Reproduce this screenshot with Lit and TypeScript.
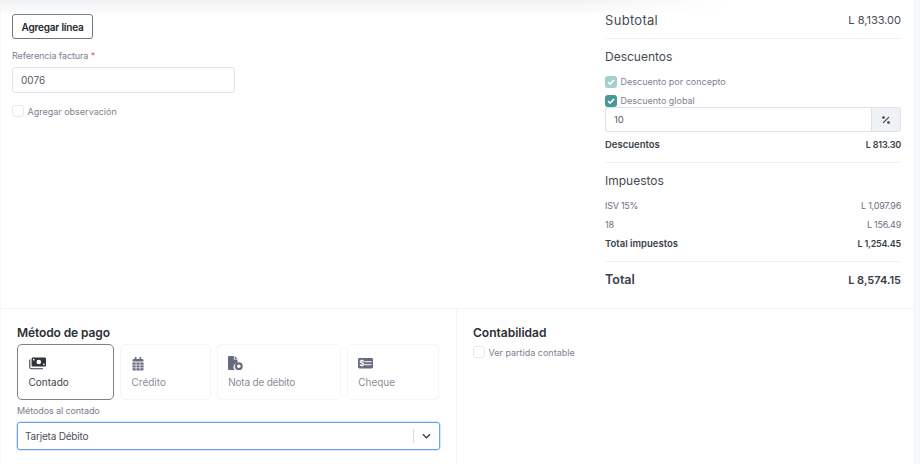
import { LitElement, html, css, svg } from "lit";
import { customElement } from "lit/decorators.js";

const check = svg`<svg viewBox="0 0 12 12" width="10" height="10"><path d="M2.5 6.2 5 8.6 9.6 3.6" fill="none" stroke="#fff" stroke-width="2"/></svg>`;

@customElement("app-root")
export class AppRoot extends LitElement {
  static styles = css`
    :host { display: block; width: 920px; height: 464px; overflow: hidden; position: relative; background: #f7f8fa; font-family: "Inter", "Open Sans", sans-serif; color: #3a3f4b; }
    .sheet { width: 912px; height: 464px; margin-left: 1px; background: #fff; display: flex; flex-direction: column; }
    .shade { position: absolute; left: 0; top: 0; width: 730px; height: 16px; background: linear-gradient(#f0f1f3, #ffffff00); -webkit-mask-image: linear-gradient(90deg, #000 78%, transparent); mask-image: linear-gradient(90deg, #000 78%, transparent); }
    .top { height: 308px; flex: none; display: flex; justify-content: space-between; border-bottom: 1px solid #f1f2f4; }
    .left { padding: 14px 0 0 11px; width: 223px; display: flex; flex-direction: column; align-items: flex-start; }
    .btn { box-sizing: border-box; height: 25px; width: 81px; border: 1px solid #6f7580; border-radius: 3px; font-size: 10px; letter-spacing: -.2px; font-weight: 600; color: #23262e; display: flex; align-items: center; justify-content: center; }
    .lab { font-size: 9px; color: #7a7e8c; line-height: 14px; margin-top: 10px; letter-spacing: -.1px; }
    .req { color: #e0566b; }
    .input { box-sizing: border-box; height: 26px; width: 223px; margin-top: 4px; border: 1px solid #e0e2e7; border-radius: 3px; padding-left: 8px; font-size: 10px; color: #555a66; display: flex; align-items: center; }
    .cb { display: flex; align-items: center; gap: 3.5px; font-size: 9px; color: #7d8190; }
    .box { box-sizing: border-box; width: 12px; height: 12px; border: 1px solid #e7e8ec; border-radius: 3px; flex: none; }
    .on { border: 0; background: #459a98; display: flex; align-items: center; justify-content: center; }
    .off { background: #a3d0cf; }
    .obs { margin-top: 11px; height: 14px; }
    .right { width: 296px; margin-right: 12px; display: flex; flex-direction: column; }
    .row { display: flex; justify-content: space-between; align-items: center; }
    .title { height: 33px; padding-top: 1px; box-sizing: border-box; display: flex; align-items: center; font-size: 12px; color: #454a55; }
    .sub { height: 38px; margin-top: 1px; box-sizing: border-box; border-bottom: 1px solid #f0f1f3; color: #454a55; font-size: 13px; letter-spacing: .3px; }
    .sub .val { font-size: 11px; letter-spacing: 0; }
    .right .cb { height: 19px; }
    .right .cb.second { box-sizing: border-box; height: 16px; padding-top: 3px; }
    .group { display: flex; height: 25px; }
    .group .num { flex: 1; box-sizing: border-box; border: 1px solid #e0e2e7; border-right: 0; border-radius: 3px 0 0 3px; font-size: 9.5px; padding-left: 8px; display: flex; align-items: center; color: #555a66; }
    .group .suf { width: 30px; box-sizing: border-box; border: 1px solid #e0e2e7; border-radius: 0 3px 3px 0; background: #eef1f5; display: flex; align-items: center; justify-content: center; }
    .small { font-size: 9px; height: 19px; color: #6c7080; letter-spacing: -.25px; }
    .bold { font-weight: 600; font-size: 9.5px; letter-spacing: 0; color: #3a3f4b; }
    .bold .val { font-size: 9px; letter-spacing: -.2px; }
    .disc { height: 31px; box-sizing: border-box; padding-bottom: 6px; border-bottom: 1px solid #f0f1f3; }
    .taxtot { height: 28px; box-sizing: border-box; padding-bottom: 8px; border-bottom: 1px solid #f0f1f3; }
    .tot { font-size: 12.5px; font-weight: 600; color: #3a3f4b; height: 35px; }
    .tot .val { font-size: 11px; }
    .bottom { flex: 1; display: flex; }
    .pay { width: 456px; box-sizing: border-box; border-right: 1px solid #f1f2f4; padding: 16px 16px 0 16px; }
    .acc { flex: 1; padding: 16px 16px 0 16px; }
    h3 { margin: 0; font-size: 12px; line-height: 15px; font-weight: 600; color: #2b2f38; }
    .pay h3 { letter-spacing: -.1px; }
    .tiles { display: flex; gap: 6px; margin-top: 4px; }
    .tile { box-sizing: border-box; height: 56px; border: 1px solid #f4f5f7; border-radius: 5px; padding: 11px 0 0 10.5px; font-size: 10px; color: #8a8e9b; }
    .tile svg { display: block; width: 18px; height: 15px; margin-bottom: 4px; }
    .tile .t { line-height: 14px; }
    .t1 { width: 97px; }
    .t2 { width: 90.7px; }
    .t3 { width: 124px; letter-spacing: -.2px; }
    .t4 { width: 92.6px; }
    .tile.sel { border: 1px solid #7d8188; color: #3f4450; }
    .methods { font-size: 9px; color: #7a7e8c; margin-top: 4px; line-height: 14px; letter-spacing: -.1px; }
    .select { box-sizing: border-box; height: 28px; margin-top: 4px; border: 1px solid #6ea4ef; box-shadow: 0 0 0 .5px #a9c9f6; border-radius: 3px; display: flex; align-items: center; padding-left: 7px; font-size: 10px; letter-spacing: -.2px; color: #4a4f5b; }
    .select .v { flex: 1; }
    .sep { width: 1px; height: 14px; background: #d8dade; }
    .chev { width: 25px; display: flex; justify-content: center; }
    .acc .cb { margin-top: 5px; height: 14px; }
  `;

  render() {
    return html`
      <div class="sheet">
        <div class="top">
          <div class="left">
            <div class="btn">Agregar línea</div>
            <div class="lab">Referencia factura <span class="req">*</span></div>
            <div class="input">0076</div>
            <div class="cb obs"><span class="box"></span>Agregar observación</div>
          </div>
          <div class="right">
            <div class="row sub"><span>Subtotal</span><span class="val">L 8,133.00</span></div>
            <div class="title">Descuentos</div>
            <div class="cb"><span class="box on off">${check}</span>Descuento por concepto</div>
            <div class="cb second"><span class="box on">${check}</span>Descuento global</div>
            <div class="group">
              <div class="num">10</div>
              <div class="suf"><svg viewBox="0 0 12 12" width="10" height="10"><path d="M2.5 9.5 9.5 2.5" stroke="#3a3f4b" stroke-width="1.3"/><circle cx="3" cy="3" r="1.6" fill="#3a3f4b"/><circle cx="9" cy="9" r="1.6" fill="#3a3f4b"/></svg></div>
            </div>
            <div class="row small bold disc"><span>Descuentos</span><span class="val">L 813.30</span></div>
            <div class="title">Impuestos</div>
            <div class="row small"><span>ISV 15%</span><span>L 1,097.96</span></div>
            <div class="row small"><span>18</span><span>L 156.49</span></div>
            <div class="row small bold taxtot"><span>Total impuestos</span><span class="val">L 1,254.45</span></div>
            <div class="row tot"><span>Total</span><span class="val">L 8,574.15</span></div>
          </div>
        </div>
        <div class="bottom">
          <div class="pay">
            <h3>Método de pago</h3>
            <div class="tiles">
              <div class="tile sel t1">
                <svg viewBox="0 0 18 15"><path d="M.8 3.5v7.7a1.6 1.6 0 0 0 1.6 1.6h11.6" fill="none" stroke="#3a3f4b" stroke-width="1.1"/><rect x="2.6" y="1.5" width="14.4" height="9" rx="1.2" fill="#2f333c"/><circle cx="9.8" cy="6" r="2.3" fill="#fff"/><rect x="4" y="2.9" width="1.5" height="1.5" fill="#fff"/><rect x="14.1" y="7.6" width="1.5" height="1.5" fill="#fff"/></svg>
                <div class="t">Contado</div>
              </div>
              <div class="tile t2">
                <svg viewBox="0 0 18 15"><path fill="#666a7e" d="M.5 4.2a1.3 1.3 0 0 1 1.3-1.3h1V1h1.6v1.9h3.2V1h1.6v1.9h1a1.3 1.3 0 0 1 1.3 1.3V5.6H.5zM.5 6.4h11V13.3a1.3 1.3 0 0 1-1.3 1.3H1.8a1.3 1.3 0 0 1-1.3-1.3z"/><path stroke="#fff" stroke-width=".7" d="M4.1 6.4v8.2M7.9 6.4v8.2M.5 9.1h11M.5 11.8h11"/></svg>
                <div class="t">Crédito</div>
              </div>
              <div class="tile t3">
                <svg viewBox="0 0 18 15"><path fill="#666a7e" d="M1.2 0H5.8v3.5H9.5v3.3A4.3 4.3 0 0 0 6.6 14H1.2A1.2 1.2 0 0 1 0 12.8V1.2A1.2 1.2 0 0 1 1.2 0zM6.6 0 9.5 2.8H6.6z"/><circle cx="10.8" cy="10.2" r="3.9" fill="#666a7e"/><circle cx="10.8" cy="10.2" r="1.8" fill="#fff"/></svg>
                <div class="t">Nota de débito</div>
              </div>
              <div class="tile t4">
                <svg viewBox="0 0 18 15"><rect x="0" y="2" width="15" height="10.4" rx="1.4" fill="#666a7e"/><path stroke="#fff" stroke-width="1" d="M6.6 5.7h7M6.6 8.7h7"/><text x="1.3" y="10.2" font-size="8" font-weight="700" fill="#fff" font-family="Inter">$</text></svg>
                <div class="t">Cheque</div>
              </div>
            </div>
            <div class="methods">Métodos al contado</div>
            <div class="select"><span class="v">Tarjeta Débito</span><span class="sep"></span><span class="chev"><svg viewBox="0 0 10 6" width="9" height="6"><path d="M1 1 5 5 9 1" fill="none" stroke="#3a3f4b" stroke-width="1.5"/></svg></span></div>
          </div>
          <div class="acc">
            <h3>Contabilidad</h3>
            <div class="cb"><span class="box"></span>Ver partida contable</div>
          </div>
        </div>
      </div>
      <div class="shade"></div>
    `;
  }
}
